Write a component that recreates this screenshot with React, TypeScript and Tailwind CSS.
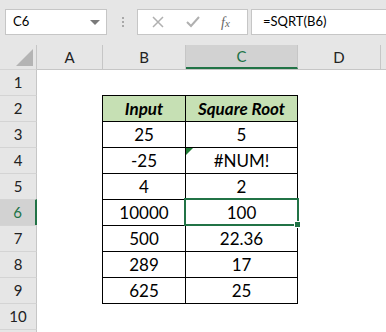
import React from "react";

const FONT = { fontFamily: "Lato, 'Open Sans', sans-serif" };

const data: [string, string][] = [
  ["25", "5"],
  ["-25", "#NUM!"],
  ["4", "2"],
  ["10000", "100"],
  ["500", "22.36"],
  ["289", "17"],
  ["625", "25"],
];

function RowHeader({ n, active }: { n?: number; active?: boolean }) {
  return (
    <div
      className={
        "w-[37px] shrink-0 h-full border-t border-t-[#d4d4d4] flex items-center justify-center text-[15px] " +
        (active
          ? "bg-[#d2d2d2] border-r-2 border-r-[#217346] text-[#217346]"
          : "bg-[#e6e6e6] border-r border-r-[#c6c6c6] text-[#222]")
      }
    >
      {n}
    </div>
  );
}

export default function App() {
  return (
    <div className="w-[386px] h-[332px] overflow-hidden bg-white" style={FONT}>
      {/* formula bar */}
      <div className="h-[45px] bg-[#e6e6e6] flex items-start pt-[9px] pl-[5px]">
        <div className="w-[102px] h-[26px] bg-white border border-[#c6c6c6] flex items-center pl-[7px] pr-[6px] text-[13px] text-black">
          <span className="flex-1">C6</span>
          <span className="w-0 h-0 border-l-[5px] border-r-[5px] border-t-[5px] border-l-transparent border-r-transparent border-t-[#7a7a7a]" />
        </div>
        <div className="ml-[15px] mt-[8px] flex flex-col gap-[2px]">
          <span className="w-[2px] h-[2px] bg-[#a8a8a8]" />
          <span className="w-[2px] h-[2px] bg-[#a8a8a8]" />
          <span className="w-[2px] h-[2px] bg-[#a8a8a8]" />
        </div>
        <div className="ml-[13px] w-[111px] h-[26px] bg-white border border-[#c6c6c6] flex items-center">
          <svg width="12" height="12" viewBox="0 0 12 12" className="ml-[14px]">
            <path d="M1 1 L11 11 M11 1 L1 11" stroke="#b0b0b0" strokeWidth="1.5" fill="none" />
          </svg>
          <svg width="14" height="12" viewBox="0 0 14 12" className="ml-[22px]">
            <path d="M1 6 L5 10 L13 1" stroke="#b0b0b0" strokeWidth="2" fill="none" />
          </svg>
          <span
            className="ml-[21px] text-[14px] italic text-[#666]"
            style={{ fontFamily: "'Liberation Serif', serif" }}
          >
            <span>f</span>
            <span className="text-[11px]">x</span>
          </span>
        </div>
        <div className="ml-[3px] flex-1 h-[26px] bg-white border border-[#c6c6c6] border-r-0 flex items-center pl-[11px] text-[13px] text-black">
          =SQRT(B6)
        </div>
      </div>

      {/* column headers */}
      <div className="h-[24px] flex bg-[#e6e6e6] text-[15px] text-[#222]">
        <div className="w-[37px] shrink-0 border-r border-[#c6c6c6] relative">
          <svg width="37" height="24" className="absolute left-0 top-0">
            <polygon points="33,4 33,21 16,21" fill="#b4b4b4" />
          </svg>
        </div>
        <div className="w-[66px] shrink-0 border-r border-[#c6c6c6] flex items-center justify-center">A</div>
        <div className="w-[83px] shrink-0 border-r border-[#c6c6c6] flex items-center justify-center">B</div>
        <div className="w-[112px] shrink-0 border-r border-[#c6c6c6] border-b-2 border-b-[#217346] bg-[#d2d2d2] flex items-center justify-center text-[#217346]">
          C
        </div>
        <div className="w-[83px] shrink-0 border-r border-[#c6c6c6] flex items-center justify-center">D</div>
        <div className="flex-1" />
      </div>

      {/* rows */}
      <div className="text-[17px] text-black">
        {/* row 1 */}
        <div className="h-[26px] flex">
          <RowHeader n={1} />
          <div className="flex-1 border-t border-t-[#c6c6c6]" />
        </div>
        {/* row 2 header */}
        <div className="h-[26px] flex">
          <RowHeader n={2} />
          <div className="w-[65px] shrink-0" />
          <div className="w-[83px] shrink-0 border-l border-t border-black bg-[#c6e0b4] flex items-center justify-center font-bold italic">
            Input
          </div>
          <div className="w-[113px] shrink-0 border-l border-t border-r border-black bg-[#c6e0b4] flex items-center justify-center font-bold italic">
            Square Root
          </div>
        </div>
        {data.map(([a, b], i) => {
          const n = i + 3;
          const active = n === 6;
          return (
            <div key={n} className="h-[26px] flex">
              <RowHeader n={n} active={active} />
              <div className="w-[65px] shrink-0" />
              <div className="w-[83px] shrink-0 border-l border-t border-black flex items-center justify-center">
                {a}
              </div>
              <div className="w-[113px] shrink-0 border-l border-t border-r border-black flex items-center justify-center relative">
                {b}
                {n === 4 && (
                  <span className="absolute left-0 top-0 w-0 h-0 border-t-[7px] border-r-[7px] border-t-[#1e7b34] border-r-transparent" />
                )}
                {active && (
                  <div className="absolute -left-[2px] -top-[2px] w-[115px] h-[28px] border-2 border-[#217346] z-10">
                    <span className="absolute -right-[4px] -bottom-[4px] w-[7px] h-[7px] bg-[#217346] border border-white" />
                  </div>
                )}
              </div>
            </div>
          );
        })}
        {/* row 10 */}
        <div className="h-[26px] flex">
          <RowHeader n={10} />
          <div className="w-[65px] shrink-0" />
          <div className="w-[196px] shrink-0 border-t border-black" />
        </div>
        <div className="h-[26px] flex">
          <RowHeader />
        </div>
      </div>
    </div>
  );
}
